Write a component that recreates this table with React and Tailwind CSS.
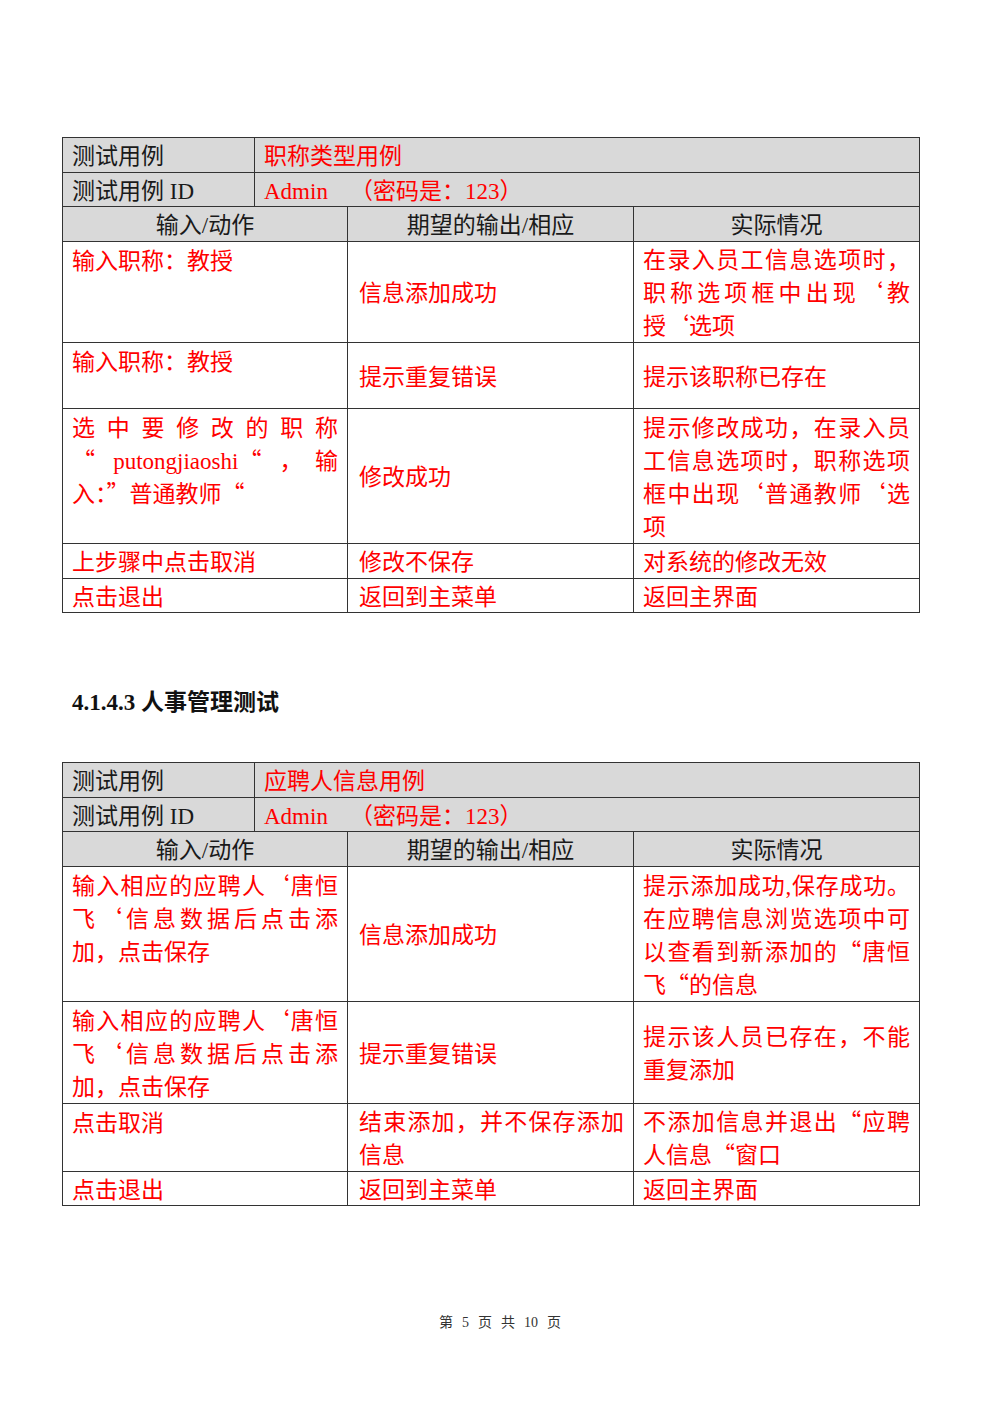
import React from "react";

// one line of a cell; j = justified to full width
const j = (t) => ({ t, j: true });

// quotes set full-width like the Word original
const withQuotes = (text) =>
  text.split(/([‘’“”])/).map((part, i) =>
    /[‘’“”]/.test(part) ? (
      <span key={i} className="font-['Noto_Sans_CJK_SC'] [font-feature-settings:'fwid'] leading-none">
        {part}
      </span>
    ) : (
      part
    )
  );

const Lines = ({ lines }) =>
  lines.map((line, i) => {
    const l = typeof line === "string" ? { t: line } : line;
    return (
      <div key={i} className={l.j ? "text-justify [text-align-last:justify]" : ""}>
        {withQuotes(l.t)}
      </div>
    );
  });

const TestTable = ({ title, rows }) => (
  <div className="w-[858px] border border-t-0 border-[#333]">
    {/* title rows */}
    <div className="flex h-[35px] border-t border-[#333] bg-[#d9d9d9]">
      <div className="w-[191px] pl-[9px] pt-[3px] flex items-center text-[#1a1a1a]">测试用例</div>
      <div className="flex-1 border-l border-[#333] pl-[9px] pt-[3px] flex items-center text-[#ff0000]">{title}</div>
    </div>
    <div className="flex h-[34px] border-t border-[#333] bg-[#d9d9d9]">
      <div className="w-[191px] pl-[9px] pt-[3px] flex items-center text-[#1a1a1a]">测试用例 ID</div>
      <div className="flex-1 border-l border-[#333] pl-[9px] pt-[3px] flex items-center text-[#ff0000]">
        Admin<span className="ml-[22px]">（密码是：123）</span>
      </div>
    </div>
    {/* column headers */}
    <div className="flex h-[35px] border-t border-[#333] bg-[#d9d9d9] text-[#1a1a1a]">
      <div className="w-[284px] pt-[3px] flex items-center justify-center">输入/动作</div>
      <div className="w-[286px] border-l border-[#333] pt-[3px] flex items-center justify-center">期望的输出/相应</div>
      <div className="w-[286px] border-l border-[#333] pt-[3px] flex items-center justify-center">实际情况</div>
    </div>
    {rows.map((r, i) => (
      <div key={i} className={`flex border-t border-[#333] text-[#ff0000] ${r.h}`}>
        <div className={`w-[284px] pl-[9px] pr-[9px] flex flex-col ${r.single ? "justify-center pt-[3px]" : "pt-[3px]"}`}>
          <Lines lines={r.a} />
        </div>
        <div className="w-[286px] border-l border-[#333] pl-[11px] pr-[9px] pt-[3px] flex flex-col justify-center">
          <Lines lines={r.b} />
        </div>
        <div className="w-[286px] border-l border-[#333] pl-[9px] pr-[9px] pt-[3px] flex flex-col justify-center">
          <Lines lines={r.c} />
        </div>
      </div>
    ))}
  </div>
);

const titleRows = [
  {
    h: "h-[101px]",
    a: ["输入职称：教授"],
    b: ["信息添加成功"],
    c: [j("在录入员工信息选项时，"), j("职称选项框中出现‘教"), "授‘选项"],
  },
  { h: "h-[66px]", a: ["输入职称：教授"], b: ["提示重复错误"], c: ["提示该职称已存在"] },
  {
    h: "h-[135px]",
    a: [j("选中要修改的职称"), j("“ putongjiaoshi“ ，输"), "入：”普通教师“"],
    b: ["修改成功"],
    c: [j("提示修改成功，在录入员"), j("工信息选项时，职称选项"), j("框中出现‘普通教师‘选"), "项"],
  },
  { h: "h-[35px]", single: true, a: ["上步骤中点击取消"], b: ["修改不保存"], c: ["对系统的修改无效"] },
  { h: "h-[34px]", single: true, a: ["点击退出"], b: ["返回到主菜单"], c: ["返回主界面"] },
];

const applicantAdd = [j("输入相应的应聘人‘唐恒"), j("飞‘信息数据后点击添"), "加，点击保存"];

const applicantRows = [
  {
    h: "h-[135px]",
    a: applicantAdd,
    b: ["信息添加成功"],
    c: [j("提示添加成功,保存成功。"), j("在应聘信息浏览选项中可"), j("以查看到新添加的“唐恒"), "飞“的信息"],
  },
  { h: "h-[102px]", a: applicantAdd, b: ["提示重复错误"], c: [j("提示该人员已存在，不能"), "重复添加"] },
  {
    h: "h-[68px]",
    a: ["点击取消"],
    b: [j("结束添加，并不保存添加"), "信息"],
    c: [j("不添加信息并退出“应聘"), "人信息“窗口"],
  },
  { h: "h-[34px]", single: true, a: ["点击退出"], b: ["返回到主菜单"], c: ["返回主界面"] },
];

export default function App() {
  return (
    <div className="min-h-[1415px] w-[1000px] bg-white pt-[137px] pl-[62px] font-['Liberation_Serif','Noto_Sans_CJK_SC',serif] text-[23px] leading-[33px]">
      <TestTable title="职称类型用例" rows={titleRows} />

      {/* section heading */}
      <h3 className="mt-[73px] pl-[10px] font-bold text-[#111]">4.1.4.3 人事管理测试</h3>

      <div className="mt-[43px]">
        <TestTable title="应聘人信息用例" rows={applicantRows} />
      </div>

      {/* page footer */}
      <div className="mt-[107px] w-[876px] flex justify-center gap-[9px] text-[14px] leading-[20px] text-[#333]">
        <span>第</span>
        <span>5</span>
        <span>页</span>
        <span>共</span>
        <span>10</span>
        <span>页</span>
      </div>
    </div>
  );
}
